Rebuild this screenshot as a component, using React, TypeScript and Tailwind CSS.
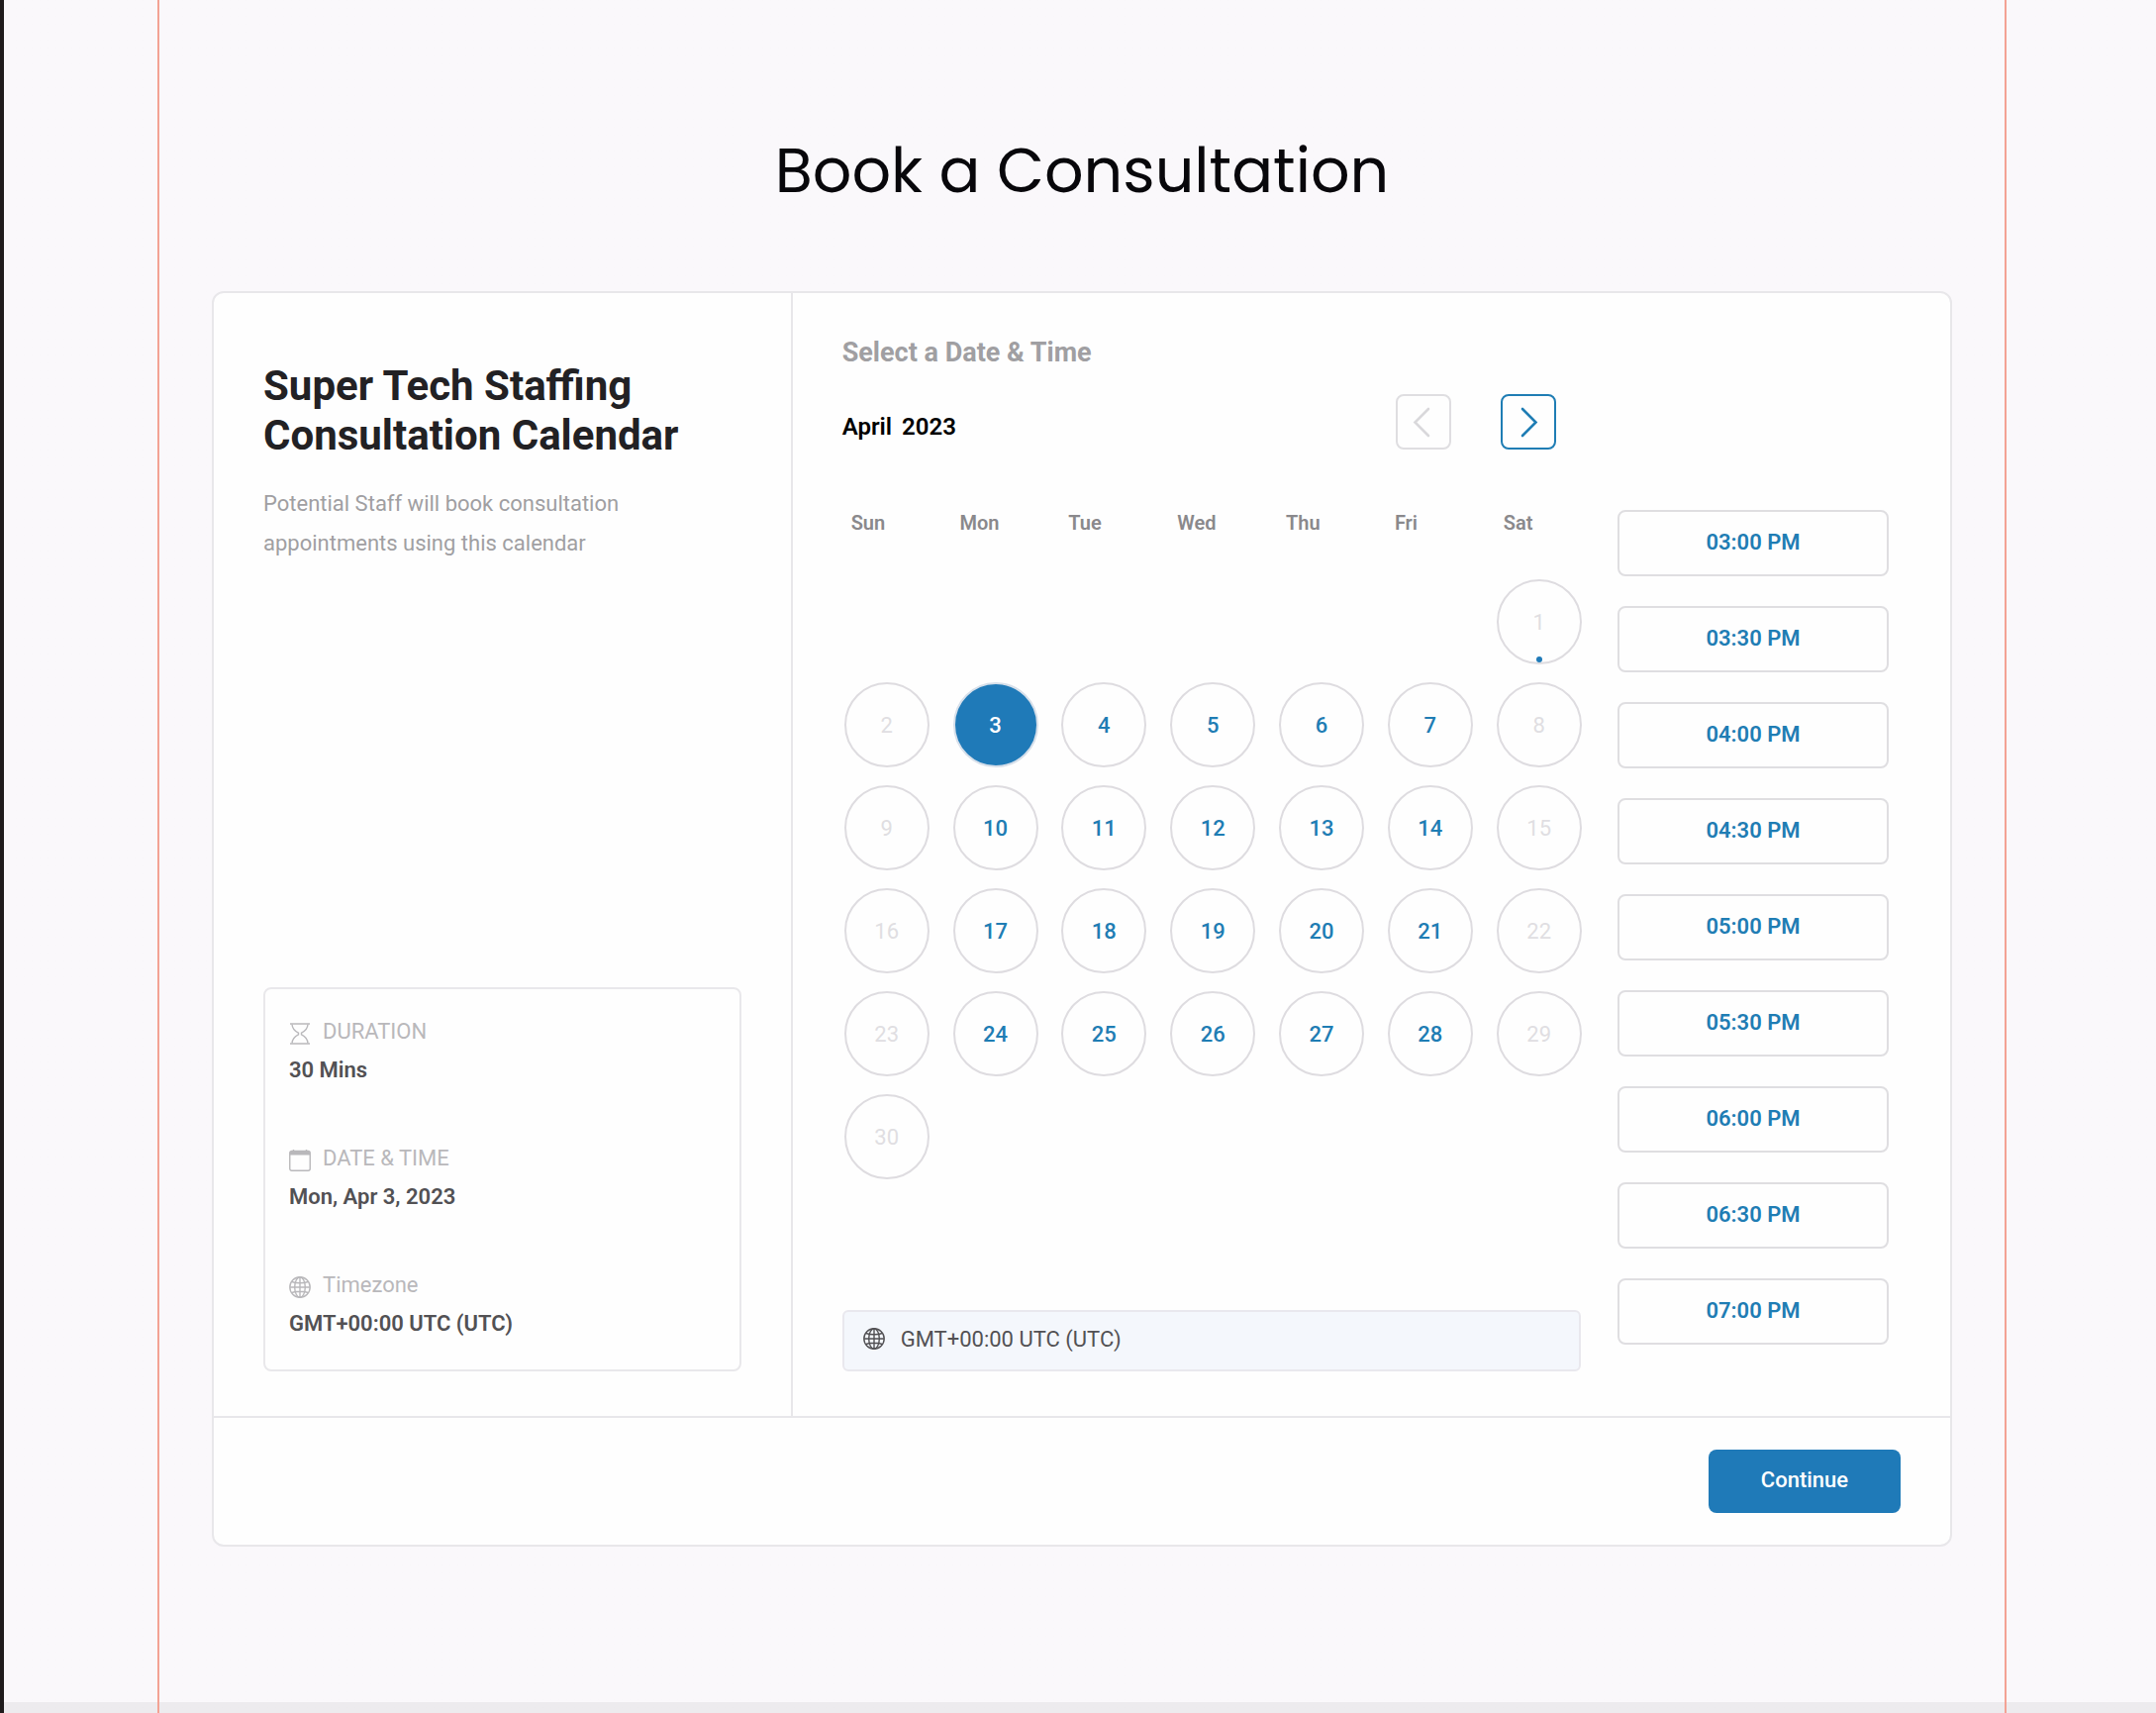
import { useState } from 'react';

const WEEK_DAYS = ['Sun', 'Mon', 'Tue', 'Wed', 'Thu', 'Fri', 'Sat'];

const TIME_SLOTS = [
  '03:00 PM',
  '03:30 PM',
  '04:00 PM',
  '04:30 PM',
  '05:00 PM',
  '05:30 PM',
  '06:00 PM',
  '06:30 PM',
  '07:00 PM',
];

const TODAY = 1;

// April 2023 starts on a Saturday
const WEEKS: (number | null)[][] = [
  [null, null, null, null, null, null, 1],
  [2, 3, 4, 5, 6, 7, 8],
  [9, 10, 11, 12, 13, 14, 15],
  [16, 17, 18, 19, 20, 21, 22],
  [23, 24, 25, 26, 27, 28, 29],
  [30, null, null, null, null, null, null],
];

const HourglassIcon = () => (
  <svg width="22" height="22" viewBox="0 0 22 22" fill="none" stroke="currentColor" strokeWidth="1.4" aria-hidden="true">
    <path d="M1 1h20M1 21h20" />
    <path d="M3 1.5C3.4 7 7 9 9.500 10.200V11.800C7 13 3.400 15 3 20.500" />
    <path d="M19 1.500C18.600 7 15 9 12.500 10.200V11.800C15 13 18.600 15 19 20.500" />
  </svg>
);

const CalendarIcon = () => (
  <svg width="22" height="22" viewBox="0 0 22 22" fill="none" stroke="currentColor" strokeWidth="1.4" aria-hidden="true">
    <rect x="0.75" y="1.5" width="20.5" height="19.8" rx="2" />
    <path d="M1 2h20v3.500H1z" fill="currentColor" stroke="none" />
    <path d="M4.500 0v2M17.500 0v2" />
  </svg>
);

const GlobeIcon = () => (
  <svg width="22" height="22" viewBox="0 0 22 22" fill="none" stroke="currentColor" strokeWidth="1.4" aria-hidden="true">
    <circle cx="11" cy="11" r="10.2" />
    <ellipse cx="11" cy="11" rx="5.300" ry="10.2" />
    <path d="M11 1v20M1 11h20M2.800 5.500c4.500 1.700 11.900 1.700 16.400 0M2.800 16.500c4.500-1.700 11.900-1.700 16.400 0" />
  </svg>
);

const DETAILS = [
  { label: 'DURATION', value: '30 Mins', icon: HourglassIcon },
  { label: 'DATE & TIME', value: 'Mon, Apr 3, 2023', icon: CalendarIcon },
  { label: 'Timezone', value: 'GMT+00:00 UTC (UTC)', icon: GlobeIcon },
];

const DayButton = ({ day, disabled, selected, onSelect }: { day: number; disabled: boolean; selected: boolean; onSelect: () => void }) => {
  let style = 'border-[#dedce0] font-medium text-[#1f7db4]';
  if (disabled) style = 'border-[#dedce0] text-[#e0dee2]';
  if (selected) style = 'border-[#d6dfea] bg-[#1f7ab8] font-medium text-white';
  return (
    <button
      type="button"
      disabled={disabled}
      onClick={onSelect}
      className={`relative flex size-[86px] items-center justify-center rounded-full border-2 text-[22px] ${style}`}
    >
      {day}
      {day === TODAY && <span className="absolute bottom-0 left-1/2 size-1.5 -translate-x-1/2 rounded-full bg-[#1f7ab8]" />}
    </button>
  );
};

const Sidebar = () => (
  <aside className="flex w-1/3 flex-col justify-between border-r-2 border-[#e8e7ea] px-[50px] pt-[69px] pb-[45px]">
    <div>
      <h2 className="text-[42px] leading-[50px] font-bold text-[#222124]">
        Super Tech Staffing
        <br />
        Consultation Calendar
      </h2>
      <p className="mt-6 max-w-[400px] text-[22px] leading-10 text-[#a09fa2]">
        Potential Staff will book consultation appointments using this calendar
      </p>
    </div>
    <dl className="flex flex-col gap-[50px] rounded-lg border-2 border-[#e9e8eb] px-6 pt-[23px] pb-[27px]">
      {DETAILS.map(({ label, value, icon: Icon }) => (
        <div key={label}>
          <dt className="flex items-center gap-3 text-[22px] leading-[39px] text-[#b9b8bb] [&>svg]:mt-1">
            <Icon />
            {label}
          </dt>
          <dd className="text-[22px] leading-[39px] font-semibold text-[#525154]">{value}</dd>
        </div>
      ))}
    </dl>
  </aside>
);

export default function App() {
  const [selectedDay, setSelectedDay] = useState(3);

  return (
    <div className="flex min-h-screen flex-col border-l-4 border-[#1f1b1c] bg-[#faf8fb] bg-linear-to-t from-[#edebee] from-[11px] to-[#faf8fb] to-[11px] font-['Roboto',sans-serif]">
      <main className="mr-[151px] ml-[155px] grow border-x-2 border-[#f3a294] px-[53px] pb-40">
        <h1 className="pt-[125px] pb-[73px] text-center font-['Poppins','Lato',sans-serif] text-[62px] leading-[96px] text-[#08070b]">
          Book a Consultation
        </h1>

        <div className="rounded-xl border-2 border-[#e8e7ea] bg-[#fefefe]">
          <div className="flex border-b-2 border-[#e8e7ea]">
            <Sidebar />

            <section className="grow pt-11 pr-[62px] pb-[45px] pl-[50px]">
              <h3 className="text-[27px] leading-8 font-bold text-[#a09fa2]">Select a Date &amp; Time</h3>
              <div className="flex justify-between">
                <div className="flex w-[746px] flex-col">
                  <div className="mt-[26px] flex items-center justify-between pr-[25px]">
                    <p className="flex gap-2.5 pt-2.5 text-[24px] font-semibold text-black">
                      <span>April</span>
                      <span>2023</span>
                    </p>
                    <div className="flex gap-[50px]">
                      <button
                        type="button"
                        disabled
                        aria-label="Previous month"
                        className="flex size-14 items-center justify-center rounded-lg border-2 border-[#dfdee1] text-[#d9d8db]"
                      >
                        <svg width="32" height="32" viewBox="0 0 32 32" fill="none" stroke="currentColor" strokeWidth="2.6" strokeLinecap="round" aria-hidden="true">
                          <path d="M21 3L7.5 16.5L21 30" />
                        </svg>
                      </button>
                      <button
                        type="button"
                        aria-label="Next month"
                        className="flex size-14 items-center justify-center rounded-lg border-2 border-[#1f7db4] text-[#1f7db4]"
                      >
                        <svg width="32" height="32" viewBox="0 0 32 32" fill="none" stroke="currentColor" strokeWidth="2.6" strokeLinecap="round" aria-hidden="true">
                          <path d="M10 3L23.5 16.5L10 30" />
                        </svg>
                      </button>
                    </div>
                  </div>

                  <table className="mt-[60px] ml-0.5 w-[769px] table-fixed border-collapse">
                    <thead>
                      <tr>
                        {WEEK_DAYS.map((name) => (
                          <th key={name} scope="col" className="pb-[43px] pl-[7px] text-left text-[20px] leading-7 font-semibold text-[#8a898c]">
                            {name}
                          </th>
                        ))}
                      </tr>
                    </thead>
                    <tbody>
                      {WEEKS.map((week, row) => (
                        <tr key={row}>
                          {week.map((day, col) => (
                            <td key={col} className="h-[104px] p-0 align-top">
                              {day && (
                                <DayButton
                                  day={day}
                                  disabled={col === 0 || col === 6}
                                  selected={day === selectedDay}
                                  onSelect={() => setSelectedDay(day)}
                                />
                              )}
                            </td>
                          ))}
                        </tr>
                      ))}
                    </tbody>
                  </table>

                  <div className="mt-auto flex h-[62px] items-center gap-4 rounded-md border-2 border-[#e9e8ee] bg-[#f4f7fc] px-[19px] pb-1 text-[22px] text-[#525154]">
                    <GlobeIcon />
                    GMT+00:00 UTC (UTC)
                  </div>
                </div>

                <ul className="flex flex-col gap-[30px] pt-[143px] pb-[27px]">
                  {TIME_SLOTS.map((slot) => (
                    <li key={slot} className="flex">
                      <button type="button" className="h-[67px] w-[274px] rounded-lg border-2 border-[#dfdee1] pb-0.5 text-[22px] font-semibold text-[#1f7db4]">
                        {slot}
                      </button>
                    </li>
                  ))}
                </ul>
              </div>
            </section>
          </div>

          <footer className="flex justify-end px-[50px] py-8">
            <button type="button" className="h-16 w-[194px] rounded-lg bg-[#1f7ab8] pb-1 text-[22px] font-medium text-white">
              Continue
            </button>
          </footer>
        </div>
      </main>
    </div>
  );
}
